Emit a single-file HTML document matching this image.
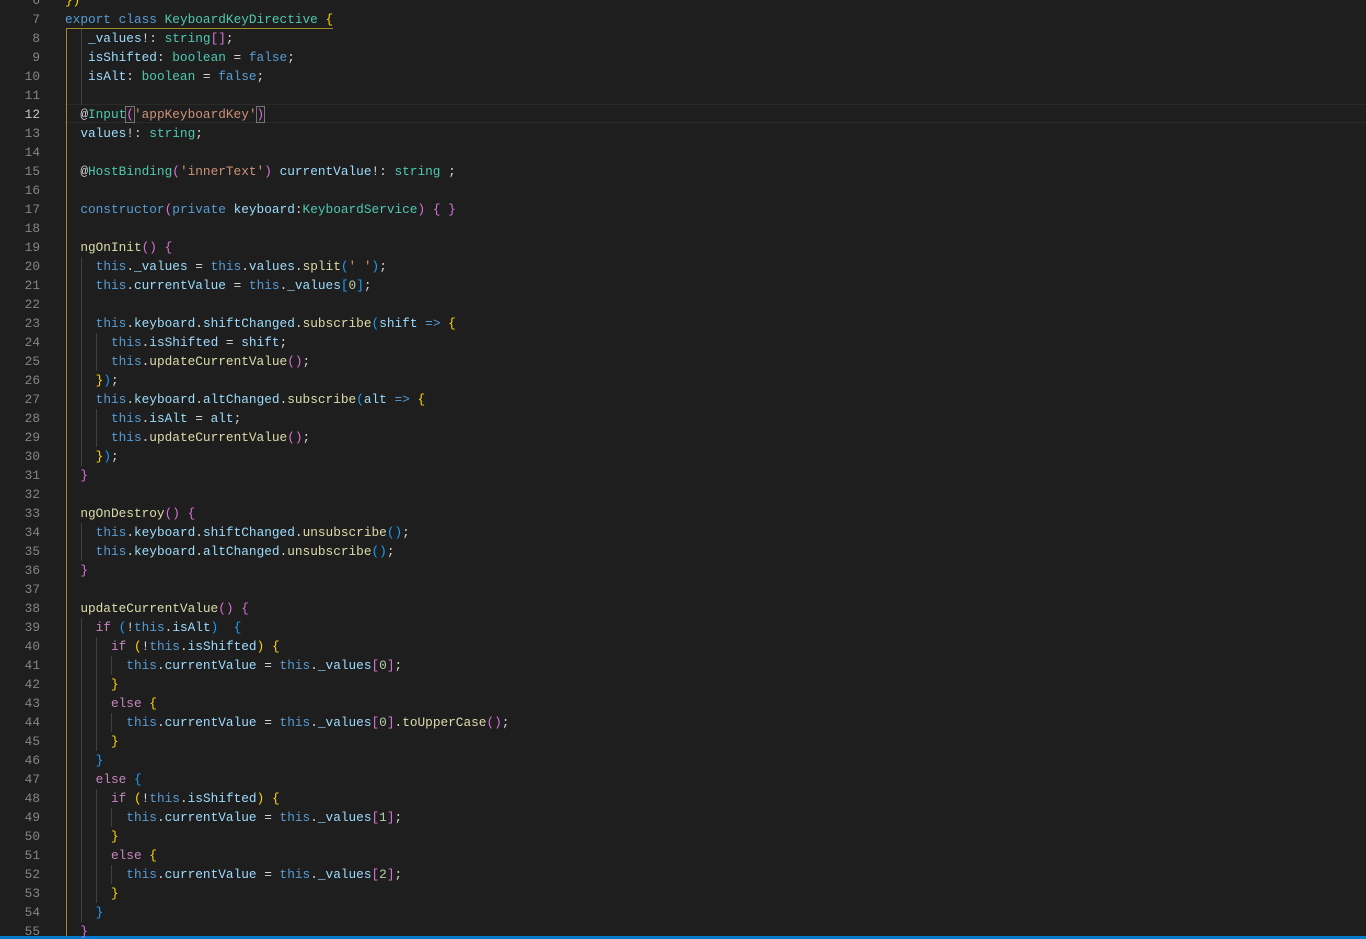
<!DOCTYPE html>
<html><head><meta charset="utf-8"><style>
html,body{margin:0;padding:0;background:#1e1e1e;width:1366px;height:939px;overflow:hidden;position:relative}
.l{position:absolute;left:65px;height:19px;line-height:19px;font-family:"Liberation Mono",monospace;font-size:12.77px;color:#d4d4d4;white-space:pre}
.ln{position:absolute;width:40px;text-align:right;left:0;height:19px;line-height:19px;font-family:"Liberation Mono",monospace;font-size:12.77px;color:#858585}
.k{color:#569cd6}.c{color:#c586c0}.t{color:#4ec9b0}.v{color:#9cdcfe}.f{color:#dcdcaa}.s{color:#ce9178}.n{color:#b5cea8}
.b1{color:#ffd700}.b2{color:#da70d6}.b3{color:#179fff}
.g{position:absolute;width:1px;background:#404040}
</style></head><body>
<div style="position:absolute;left:65px;right:0;top:104px;height:19px;border-top:1px solid #2a2a2a;border-bottom:1px solid #2a2a2a;box-sizing:border-box"></div>
<div style="position:absolute;left:66px;top:29px;width:1px;height:910px;background:#a08a2a"></div>
<div style="position:absolute;left:66px;top:28px;width:267px;height:1px;background:#a08a2a"></div>
<div class="g" style="left:81px;top:29px;height:76px"></div>
<div class="g" style="left:81px;top:257px;height:209px"></div>
<div class="g" style="left:81px;top:523px;height:38px"></div>
<div class="g" style="left:81px;top:618px;height:304px"></div>
<div class="g" style="left:96px;top:333px;height:38px"></div>
<div class="g" style="left:96px;top:409px;height:38px"></div>
<div class="g" style="left:96px;top:637px;height:114px"></div>
<div class="g" style="left:96px;top:789px;height:114px"></div>
<div class="g" style="left:111px;top:656px;height:19px"></div>
<div class="g" style="left:111px;top:713px;height:19px"></div>
<div class="g" style="left:111px;top:808px;height:19px"></div>
<div class="g" style="left:111px;top:865px;height:19px"></div>
<div style="position:absolute;left:0;right:0;top:936px;height:3px;background:#007acc"></div>
<div id="c"></div>
<script>
var L={
6:'<span class="b1">})</span>',
7:'<span class="k">export</span> <span class="k">class</span> <span class="t">KeyboardKeyDirective</span> <span class="b1">{</span>',
8:'   <span class="v">_values</span>!: <span class="t">string</span><span class="b2">[]</span>;',
9:'   <span class="v">isShifted</span>: <span class="t">boolean</span> = <span class="k">false</span>;',
10:'   <span class="v">isAlt</span>: <span class="t">boolean</span> = <span class="k">false</span>;',
11:'',
12:'  @<span class="t">Input</span><span class="b2" style="outline:1px solid #777">(</span><span class="s">\'appKeyboardKey\'</span><span class="b2" style="outline:1px solid #777">)</span>',
13:'  <span class="v">values</span>!: <span class="t">string</span>;',
14:'',
15:'  @<span class="t">HostBinding</span><span class="b2">(</span><span class="s">\'innerText\'</span><span class="b2">)</span> <span class="v">currentValue</span>!: <span class="t">string</span> ;',
16:'',
17:'  <span class="k">constructor</span><span class="b2">(</span><span class="k">private</span> <span class="v">keyboard</span>:<span class="t">KeyboardService</span><span class="b2">)</span> <span class="b2">{ }</span>',
18:'',
19:'  <span class="f">ngOnInit</span><span class="b2">()</span> <span class="b2">{</span>',
20:'    <span class="k">this</span>.<span class="v">_values</span> = <span class="k">this</span>.<span class="v">values</span>.<span class="f">split</span><span class="b3">(</span><span class="s">\' \'</span><span class="b3">)</span>;',
21:'    <span class="k">this</span>.<span class="v">currentValue</span> = <span class="k">this</span>.<span class="v">_values</span><span class="b3">[</span><span class="n">0</span><span class="b3">]</span>;',
22:'',
23:'    <span class="k">this</span>.<span class="v">keyboard</span>.<span class="v">shiftChanged</span>.<span class="f">subscribe</span><span class="b3">(</span><span class="v">shift</span> <span class="k">=&gt;</span> <span class="b1">{</span>',
24:'      <span class="k">this</span>.<span class="v">isShifted</span> = <span class="v">shift</span>;',
25:'      <span class="k">this</span>.<span class="f">updateCurrentValue</span><span class="b2">()</span>;',
26:'    <span class="b1">}</span><span class="b3">)</span>;',
27:'    <span class="k">this</span>.<span class="v">keyboard</span>.<span class="v">altChanged</span>.<span class="f">subscribe</span><span class="b3">(</span><span class="v">alt</span> <span class="k">=&gt;</span> <span class="b1">{</span>',
28:'      <span class="k">this</span>.<span class="v">isAlt</span> = <span class="v">alt</span>;',
29:'      <span class="k">this</span>.<span class="f">updateCurrentValue</span><span class="b2">()</span>;',
30:'    <span class="b1">}</span><span class="b3">)</span>;',
31:'  <span class="b2">}</span>',
32:'',
33:'  <span class="f">ngOnDestroy</span><span class="b2">()</span> <span class="b2">{</span>',
34:'    <span class="k">this</span>.<span class="v">keyboard</span>.<span class="v">shiftChanged</span>.<span class="f">unsubscribe</span><span class="b3">()</span>;',
35:'    <span class="k">this</span>.<span class="v">keyboard</span>.<span class="v">altChanged</span>.<span class="f">unsubscribe</span><span class="b3">()</span>;',
36:'  <span class="b2">}</span>',
37:'',
38:'  <span class="f">updateCurrentValue</span><span class="b2">()</span> <span class="b2">{</span>',
39:'    <span class="c">if</span> <span class="b3">(</span>!<span class="k">this</span>.<span class="v">isAlt</span><span class="b3">)</span>  <span class="b3">{</span>',
40:'      <span class="c">if</span> <span class="b1">(</span>!<span class="k">this</span>.<span class="v">isShifted</span><span class="b1">)</span> <span class="b1">{</span>',
41:'        <span class="k">this</span>.<span class="v">currentValue</span> = <span class="k">this</span>.<span class="v">_values</span><span class="b2">[</span><span class="n">0</span><span class="b2">]</span>;',
42:'      <span class="b1">}</span>',
43:'      <span class="c">else</span> <span class="b1">{</span>',
44:'        <span class="k">this</span>.<span class="v">currentValue</span> = <span class="k">this</span>.<span class="v">_values</span><span class="b2">[</span><span class="n">0</span><span class="b2">]</span>.<span class="f">toUpperCase</span><span class="b2">()</span>;',
45:'      <span class="b1">}</span>',
46:'    <span class="b3">}</span>',
47:'    <span class="c">else</span> <span class="b3">{</span>',
48:'      <span class="c">if</span> <span class="b1">(</span>!<span class="k">this</span>.<span class="v">isShifted</span><span class="b1">)</span> <span class="b1">{</span>',
49:'        <span class="k">this</span>.<span class="v">currentValue</span> = <span class="k">this</span>.<span class="v">_values</span><span class="b2">[</span><span class="n">1</span><span class="b2">]</span>;',
50:'      <span class="b1">}</span>',
51:'      <span class="c">else</span> <span class="b1">{</span>',
52:'        <span class="k">this</span>.<span class="v">currentValue</span> = <span class="k">this</span>.<span class="v">_values</span><span class="b2">[</span><span class="n">2</span><span class="b2">]</span>;',
53:'      <span class="b1">}</span>',
54:'    <span class="b3">}</span>',
55:'  <span class="b2">}</span>'
};
var h='';
for(var n=6;n<=55;n++){var t=10+(n-7)*19;
h+='<div class="ln" style="top:'+t+'px;'+(n==12?'color:#c6c6c6':'')+'">'+n+'</div>';
h+='<div class="l" style="top:'+t+'px">'+L[n]+'</div>';}
document.getElementById('c').innerHTML=h;
</script>
</body></html>
